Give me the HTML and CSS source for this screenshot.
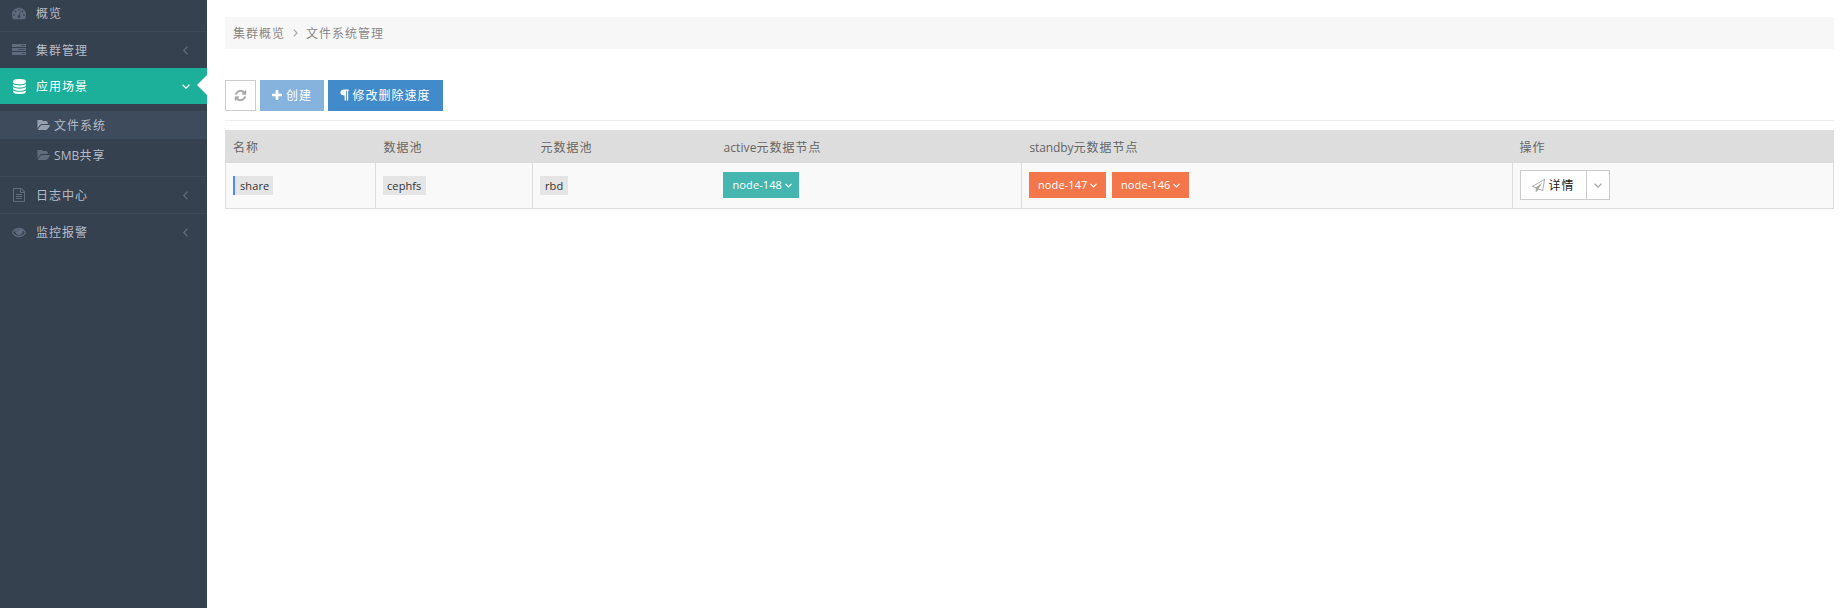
FILE: index.html
```html
<!DOCTYPE html>
<html lang="zh-CN">
<head>
<meta charset="utf-8">
<title>文件系统管理</title>
<link rel="stylesheet" href="styles.css">
</head>
<body>
<svg class="defs" width="0" height="0">
  <symbol id="gauge" viewBox="0 0 1792 1792"><path class="heavy" d="M384 1152q0-53-37.5-90.5t-90.5-37.5-90.5 37.5-37.5 90.5 37.5 90.5 90.5 37.5 90.5-37.5 37.5-90.5zm192-448q0-53-37.5-90.5t-90.5-37.5-90.5 37.5-37.5 90.5 37.5 90.5 90.5 37.5 90.5-37.5 37.5-90.5zm428 481l101-382q6-26-7.5-48.5t-38.5-29.5-48 6.5-30 39.5l-101 382q-60 5-107 43.5t-63 98.5q-20 77 20 146t117 89 146-20 89-117q16-60-6-117t-72-91zm660-33q0-53-37.5-90.5t-90.5-37.5-90.5 37.5-37.5 90.5 37.5 90.5 90.5 37.5 90.5-37.5 37.5-90.5zm-640-640q0-53-37.5-90.5t-90.5-37.5-90.5 37.5-37.5 90.5 37.5 90.5 90.5 37.5 90.5-37.5 37.5-90.5zm448 192q0-53-37.5-90.5t-90.5-37.5-90.5 37.5-37.5 90.5 37.5 90.5 90.5 37.5 90.5-37.5 37.5-90.5zm320 448q0 261-141 483-19 29-54 29h-1402q-35 0-54-29-141-221-141-483 0-182 71-348t191-286 286-191 348-71 348 71 286 191 191 286 71 348z"/></symbol>
  <symbol id="tasks" viewBox="0 0 14 14"><path fill-rule="evenodd" d="M0 1h14v3H0zM9 2.200v.7H13V2.200zM0 5h14v3H0zM6 6.200v.7h7V6.200zM0 9h14v3H0zM10 10.200v.7h3v-.7z"/></symbol>
  <symbol id="database" viewBox="0 0 1792 1792"><path d="M896 768q237 0 443-43t325-127v170q0 69-103 128t-280 93.5-385 34.5-385-34.5-280-93.5-103-128v-170q119 84 325 127t443 43zm0 768q237 0 443-43t325-127v170q0 69-103 128t-280 93.5-385 34.5-385-34.5-280-93.5-103-128v-170q119 84 325 127t443 43zm0-384q237 0 443-43t325-127v170q0 69-103 128t-280 93.5-385 34.5-385-34.5-280-93.5-103-128v-170q119 84 325 127t443 43zm0-1152q208 0 385 34.5t280 93.5 103 128v128q0 69-103 128t-280 93.5-385 34.5-385-34.5-280-93.5-103-128v-128q0-69 103-128t280-93.5 385-34.5z"/></symbol>
  <symbol id="folder" viewBox="0 256 1943 1280" preserveAspectRatio="none"><path d="M1943 952q0 31-31 66l-336 396q-43 51-120.5 86.5t-143.5 35.5h-1088q-34 0-60.5-13t-26.5-43q0-31 31-66l336-396q43-51 120.5-86.5t143.5-35.5h1088q34 0 60.5 13t26.5 43zm-343-344v160h-832q-94 0-197 47.5t-164 119.5l-337 396-5 6q0-4-.5-12.5t-.5-12.5v-960q0-92 66-158t158-66h320q92 0 158 66t66 158v32h544q92 0 158 66t66 158z"/></symbol>
  <symbol id="file" viewBox="0 0 1792 1792"><path d="M1596 380q28 28 48 76t20 88v1152q0 40-28 68t-68 28h-1344q-40 0-68-28t-28-68v-1600q0-40 28-68t68-28h896q40 0 88 20t76 48zm-444-244v376h376q-10-29-22-41l-313-313q-12-12-41-22zm384 1528v-1024h-416q-40 0-68-28t-28-68v-416h-768v1536h1280zM512 768h768v128H512zM512 1024h768v128H512zM512 1280h768v128H512z"/></symbol>
  <symbol id="eye" viewBox="0 0 1792 1792"><path class="heavy" d="M1664 960q-152-236-381-353 61 104 61 225 0 185-131.5 316.5t-316.5 131.5-316.5-131.5-131.5-316.5q0-121 61-225-229 117-381 353 133 205 333.5 326.5t434.5 121.5 434.5-121.5 333.5-326.5zm-720-384q0-20-14-34t-34-14q-125 0-214.5 89.5t-89.5 214.5q0 20 14 34t34 14 34-14 14-34q0-86 61-147t147-61q20 0 34-14t14-34zm848 384q0 34-20 69-140 230-376.5 368.5t-499.5 138.5-499.5-139-376.5-368q-20-35-20-69t20-69q140-229 376.5-368t499.5-139 499.5 139 376.5 368q20 35 20 69z"/></symbol>
  <symbol id="refresh" viewBox="0 0 1792 1792"><path class="heavy" d="M1639 1056q0 5-1 7-64 268-268 434.5t-478 166.5q-146 0-282.5-55t-243.5-157l-129 129q-19 19-45 19t-45-19-19-45v-448q0-26 19-45t45-19h448q26 0 45 19t19 45-19 45l-137 137q71 66 161 102t187 36q134 0 250-65t186-179q11-17 53-117 8-23 30-23h192q13 0 22.5 9.5t9.5 22.5zm25-800v448q0 26-19 45t-45 19h-448q-26 0-45-19t-19-45 19-45l138-138q-148-137-349-137-134 0-250 65t-186 179q-11 17-53 117-8 23-30 23h-199q-13 0-22.5-9.5t-9.5-22.5v-7q65-268 270-434.5t480-166.500q146 0 284 55.5t245 156.5l130-129q19-19 45-19t45 19 19 45z"/></symbol>
  <symbol id="plus" viewBox="192 128 1408 1408"><path d="M1600 736v192q0 40-28 68t-68 28h-416v416q0 40-28 68t-68 28h-192q-40 0-68-28t-28-68v-416h-416q-40 0-68-28t-28-68v-192q0-40 28-68t68-28h416v-416q0-40 28-68t68-28h192q40 0 68 28t28 68v416h416q40 0 68 28t28 68z"/></symbol>
  <symbol id="para" viewBox="0 0 9 12"><path d="M4.2 .5H8.8V1.7H8.2V11.5H6.8V1.7H6V11.5H4.6V6.6C2 6.6 .4 5.4 .4 3.6S2 .5 4.2 .5z"/></symbol>
  <symbol id="plane" viewBox="0 0 1792 1792"><path d="M1764 11q33 24 27 64l-256 1536q-5 29-32 45-14 8-31 8-11 0-24-5l-527-215-298 327q-18 21-47 21-14 0-23-4-19-7-30-23.500t-11-36.500v-452l-472-193q-37-14-40-55-3-39 32-59l1664-960q35-21 68 2zm-342 1499l221-1323-1434 827 336 137 863-639-478 797z"/></symbol>
  <symbol id="down" viewBox="0 0 8 5"><path class="line" d="M.6 .7L4 4.100L7.400 .7"/></symbol>
  <symbol id="left" viewBox="0 0 5 9"><path class="line" d="M4.400 .6L.8 4.500L4.400 8.400"/></symbol>
</svg>
<div class="page">
  <nav class="sidebar">
    <a class="item first"><svg class="icon"><use href="#gauge"/></svg><span>概览</span></a>
    <a class="item second"><svg class="icon"><use href="#tasks"/></svg><span>集群管理</span><svg class="left"><use href="#left"/></svg></a>
    <a class="item active"><svg class="icon"><use href="#database"/></svg><span>应用场景</span><svg class="open"><use href="#down"/></svg><i class="notch"></i></a>
    <div class="submenu">
      <a class="sub current"><svg class="folder"><use href="#folder"/></svg><span>文件系统</span></a>
      <a class="sub"><svg class="folder"><use href="#folder"/></svg><span><b class="latin">SMB</b>共享</span></a>
    </div>
    <a class="item log"><svg class="icon"><use href="#file"/></svg><span>日志中心</span><svg class="left"><use href="#left"/></svg></a>
    <a class="item"><svg class="icon"><use href="#eye"/></svg><span>监控报警</span><svg class="left"><use href="#left"/></svg></a>
  </nav>
  <main class="content">
    <div class="breadcrumb"><span>集群概览</span><svg class="crumb"><use href="#left"/></svg><span>文件系统管理</span></div>
    <div class="toolbar">
      <button class="btn reload"><svg><use href="#refresh"/></svg></button>
      <button class="btn create"><svg><use href="#plus"/></svg><span>创建</span></button>
      <button class="btn speed"><svg><use href="#para"/></svg><span>修改删除速度</span></button>
    </div>
    <table class="grid">
      <colgroup><col class="c1"><col class="c2"><col class="c3"><col class="c4"><col class="c5"><col class="c6"></colgroup>
      <thead><tr><th>名称</th><th>数据池</th><th>元数据池</th><th><b class="latin">active</b>元数据节点</th><th><b class="latin standby">standby</b>元数据节点</th><th>操作</th></tr></thead>
      <tbody><tr>
        <td><span class="tag name">share</span></td>
        <td><span class="tag">cephfs</span></td>
        <td class="open-end"><span class="tag rbd">rbd</span></td>
        <td><div class="nodes"><span class="node teal">node-148<svg><use href="#down"/></svg></span></div></td>
        <td><div class="nodes"><span class="node">node-147<svg><use href="#down"/></svg></span><span class="node">node-146<svg><use href="#down"/></svg></span></div></td>
        <td><div class="group"><button class="detail"><svg><use href="#plane"/></svg><span>详情</span></button><button class="more"><svg><use href="#down"/></svg></button></div></td>
      </tr></tbody>
    </table>
  </main>
</div>
</body>
</html>
```
FILE: styles.css
```css
* { box-sizing: border-box; }
body { margin: 0; background: #fff; font: 12px/18px "Open Sans", "Noto Sans CJK SC", sans-serif; letter-spacing: 1px; color: #333; }
button { font: inherit; letter-spacing: inherit; margin: 0; padding: 0; border-radius: 0; }
svg { display: block; fill: currentColor; flex: none; }
.latin { font-weight: 400; letter-spacing: .1px; }
.standby { letter-spacing: -.1px; }
.defs { position: absolute; }
.line { fill: none; stroke: currentColor; stroke-width: 1.3; }
.heavy { stroke: currentColor; stroke-width: 50; }
.page { display: flex; height: 608px; overflow: hidden; }
.sidebar { width: 207px; flex: none; background: #364150; }
.item { position: relative; display: flex; align-items: center; height: 37px; padding: 0 19px 0 12px; border-top: 1px solid #3d4957; color: #b4bcc8; }
.item span { flex: 1; margin-left: 10px; }
.item span, .sub span, .breadcrumb span, .btn span, .detail span { padding-top: 2px; }
.icon { width: 14px; height: 14px; color: #606c7d; }
.left { width: 5px; height: 9px; color: #606c7d; }
.first { height: 31px; border-top: 0; padding-bottom: 5px; }
.active { height: 36px; border-top: 0; background: #1caf9a; color: #fff; padding-right: 17px; }
.active .icon { width: 15px; height: 15px; margin-right: -1px; color: #fff; }
.open { width: 8px; height: 5px; }
.notch { position: absolute; right: 0; top: 7px; border: solid transparent; border-width: 10px 10px 10px 0; border-right-color: #fff; }
.submenu { height: 72px; padding-top: 7px; }
.sub { display: flex; align-items: center; height: 28px; padding-left: 37px; color: #b4bcc8; }
.sub + .sub { height: 32px; }
.folder { width: 13px; height: 10px; margin-right: 4px; color: #606c7d; }
.current { background: #3e4b5c; }
.current .folder { color: #959fad; }
.content { flex: 1; padding: 17px 10px 0 18px; }
.breadcrumb { display: flex; align-items: center; height: 32px; padding-left: 8px; background: #f7f7f7; color: #888; }
.crumb { width: 5px; height: 8px; margin: 0 8px; transform: scaleX(-1); color: #aaa; }
.toolbar { display: flex; gap: 4px; margin-top: 31px; height: 41px; border-bottom: 1px solid #eee; }
.btn { display: flex; align-items: center; justify-content: center; height: 31px; border: 0; color: #fff; padding-bottom: 1px; }
.reload { width: 31px; border: 1px solid #ccc; background: #fff; color: #aaa; padding: 0; }
.reload svg { width: 13px; height: 13px; }
.create { width: 64px; background: #86b3dd; }
.create svg { width: 10px; height: 10px; margin-right: 4px; }
.speed { width: 115px; background: #428bca; }
.speed svg { width: 9px; height: 12px; margin-right: 3px; }
.grid { width: 1609px; margin-top: 9px; border-collapse: collapse; table-layout: fixed; border: 1px solid #ddd; }
.c1 { width: 150px; } .c2 { width: 157px; } .c3 { width: 183px; } .c4 { width: 306px; } .c5 { width: 491px; }
.grid th { height: 32px; padding: 2px 8px 0; background: #ddd; color: #666; font-weight: 400; line-height: 18px; text-align: left; }
.grid th:first-child, .grid th:last-child { padding-left: 7px; }
.grid td { height: 46px; padding: 0 7px; border-left: 1px solid #ddd; background: #f9f9f9; }
.grid td.open-end + td { border-left: 0; padding-left: 7px; }
.tag { display: block; width: 43px; height: 19px; padding-left: 4px; background: #e5e5e5; font-size: 11px; line-height: 19px; margin-top: 1px; letter-spacing: .1px; }
.name { width: 40px; border-left: 2px solid #4b8df8; padding-left: 5px; }
.rbd { width: 28px; padding-left: 5px; }
.nodes { display: flex; gap: 6px; }
.node { display: flex; align-items: center; width: 77px; height: 26px; padding-left: 9px; background: #f3774b; color: #fff; font-size: 11px; letter-spacing: .1px; }
.node svg { width: 7px; height: 5px; margin-left: 3px; }
.teal { width: 76px; padding-left: 10px; background: #45b6af; }
.group { display: flex; width: 90px; height: 30px; border: 1px solid #ccc; background: #fff; }
.group button { display: flex; align-items: center; justify-content: center; border: 0; background: #fff; color: #222; }
.group .detail { width: 66px; border-right: 1px solid #ccc; }
.group button svg { color: #aaa; }
.detail svg { width: 13px; height: 13px; margin-right: 3px; }
.group .more { width: 22px; }
.more svg { width: 8px; height: 5px; }
```
